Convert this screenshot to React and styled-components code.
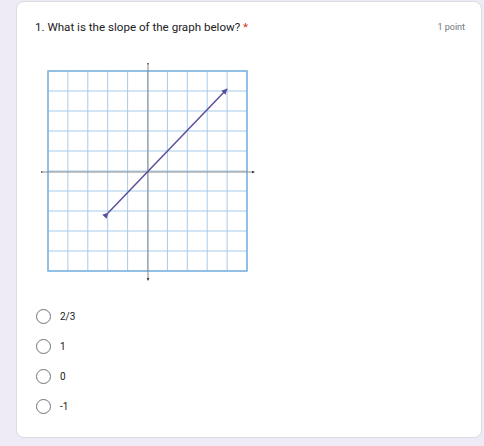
import React from "react";
import styled, { createGlobalStyle } from "styled-components";

const GlobalStyle = createGlobalStyle`
  html, body {
    margin: 0;
    padding: 0;
    background: #eeebf6;
    font-family: Roboto, "Noto Sans", sans-serif;
  }
`;

const Page = styled.div`
  padding: 1px 2px 0 16px;
  height: 446px;
  box-sizing: border-box;
`;

const Card = styled.div`
  background: #fff;
  border: 1px solid #dadce0;
  border-radius: 8px;
  height: 437px;
  box-sizing: border-box;
  padding: 18px 16px 0 18px;
`;

const Header = styled.div`
  display: flex;
  justify-content: space-between;
  align-items: center;
`;

const Title = styled.div`
  font-size: 11.6px;
  color: #202124;
  span {
    color: #d93025;
  }
`;

const Points = styled.div`
  font-size: 9px;
  color: #70757a;
`;

const Graph = styled.svg`
  display: block;
  margin: 29px 0 0 6px;
`;

const Options = styled.div`
  display: flex;
  flex-direction: column;
  gap: 15px;
  margin-top: 26px;
`;

const Option = styled.label`
  display: flex;
  align-items: center;
  gap: 9px;
  font-size: 10px;
  color: #202124;
`;

const Radio = styled.span`
  width: 13px;
  height: 13px;
  border: 1.5px solid #6f7378;
  border-radius: 50%;
  margin-left: 1px;
`;

function Grid() {
  const lines = [];
  for (let i = 0; i <= 10; i++) {
    const p = 7 + i * 19.9;
    lines.push(<line key={"v" + i} x1={p} y1={8} x2={p} y2={208} stroke="#a6cbea" strokeWidth="1" />);
    lines.push(<line key={"h" + i} x1={7} y1={8 + i * 20} x2={206} y2={8 + i * 20} stroke="#a6cbea" strokeWidth="1" />);
  }
  return (
    <Graph width="216" height="220" viewBox="0 0 216 220">
      <defs>
        <marker id="ah" markerWidth="4" markerHeight="4" refX="3.5" refY="2" orient="auto">
          <path d="M0,0 L4,2 L0,4 z" fill="#5b4f9c" />
        </marker>
        <marker id="ax" markerWidth="3" markerHeight="3" refX="2" refY="1.5" orient="auto">
          <path d="M0,0 L3,1.5 L0,3 z" fill="#444" />
        </marker>
      </defs>
      {lines}
      <rect x="7" y="8" width="199" height="200" fill="none" stroke="#7fb3e0" strokeWidth="1.5" />
      <line x1="107" y1="1" x2="107" y2="217" stroke="#888" strokeWidth="1" markerEnd="url(#ax)" markerStart="url(#ax)" />
      <line x1="1" y1="109" x2="213" y2="109" stroke="#888" strokeWidth="1" markerEnd="url(#ax)" markerStart="url(#ax)" />
      <line x1="67" y1="150" x2="186" y2="26" stroke="#5b4f9c" strokeWidth="1.5" markerEnd="url(#ah)" markerStart="url(#ah)" />
    </Graph>
  );
}

export default function App() {
  const choices = ["2/3", "1", "0", "-1"];
  return (
    <Page>
      <GlobalStyle />
      <Card>
        <Header>
          <Title>
            1. What is the slope of the graph below? <span>*</span>
          </Title>
          <Points>1 point</Points>
        </Header>
        <Grid />
        <Options>
          {choices.map((c) => (
            <Option key={c}>
              <Radio />
              {c}
            </Option>
          ))}
        </Options>
      </Card>
    </Page>
  );
}
